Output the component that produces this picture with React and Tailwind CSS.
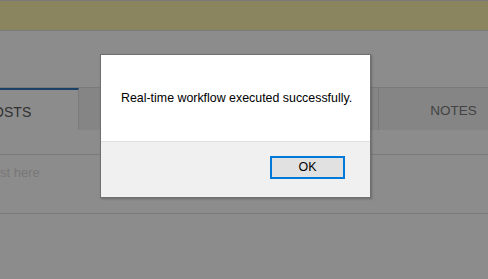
const tabs = ["POSTS", "PHOTOS", "EVENTS", "NOTES"];

export default function App() {
  return (
    <div
      className="relative h-[279px] w-[488px] overflow-hidden bg-white"
      style={{ fontFamily: '"Liberation Sans", Arial, sans-serif' }}
    >
      {/* underlying page */}
      <div className="h-[31px] border-y border-[#dedede] bg-[#fdf2ae]" />
      <div className="-ml-[71px] w-[600px]">
        <div className="mt-[56px] flex h-[43px] border-t border-[#dedede]">
          {tabs.map((t, i) => (
            <div
              key={t}
              className={
                i === 0
                  ? "flex w-[150px] items-center justify-center border-t-2 border-r border-t-[#3377bb] border-r-[#dedede] bg-white pl-[8px] pt-[4px] text-[14px] text-[#5a5a5a]"
                  : "flex w-[150px] items-center justify-center border-r border-[#dedede] bg-[#f2f2f2] pt-[4px] text-[13.5px] text-[#7a7a7a]"
              }
            >
              {t}
            </div>
          ))}
        </div>
        <div className="mt-[24px] h-[60px] border-y border-[#dedede]">
          <p className="ml-[-6px] pt-[8px] text-[13px] text-[#dadada]">Write your post here</p>
        </div>
        <h2 className="ml-[96px] mt-[58px] text-[20px] font-bold text-[#333]">Automated workflows</h2>
      </div>

      {/* modal overlay */}
      <div className="absolute inset-0 bg-black/45">
        <div className="absolute left-[100px] top-[54px] w-[271px] border border-[#707070] bg-white shadow-[1px_1px_2px_rgba(0,0,0,0.25)]">
          <div className="h-[86px] pl-[20px] pt-[34px] text-[12.4px] text-black">
            Real-time workflow executed successfully.
          </div>
          <div className="flex h-[56px] justify-end border-t border-[#dfdfdf] bg-[#f0f0f0] pr-[25px] pt-[14px]">
            <button className="h-[23px] w-[75px] border-2 border-[#0078d7] bg-[#e1e1e1] text-[12.4px] text-black">
              OK
            </button>
          </div>
        </div>
      </div>
    </div>
  );
}
